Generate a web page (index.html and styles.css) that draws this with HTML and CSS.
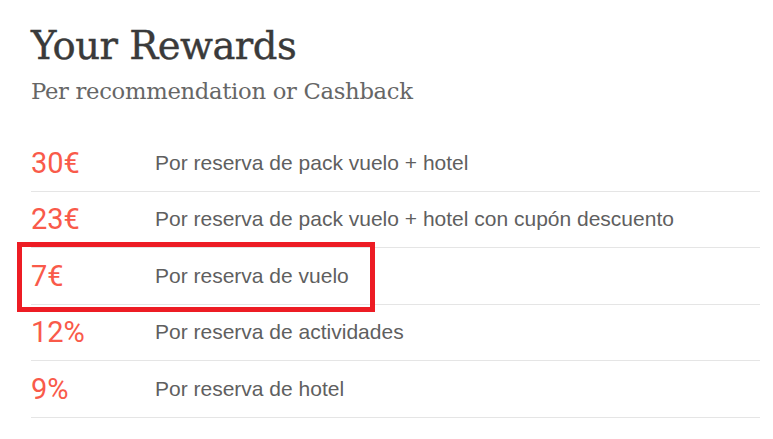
FILE: index.html
```html
<!DOCTYPE html>
<html lang="es">
<head>
    <meta charset="UTF-8">
    <meta name="viewport" content="width=device-width, initial-scale=1.0">
    <title>Your Rewards</title>
    <link rel="stylesheet" href="styles.css">
</head>
<body>
    <div class="rewards">
        <h1>Your Rewards</h1>
        <p class="subtitle">Per recommendation or Cashback</p>

        <!-- Lista de recompensas -->
        <ul class="reward-list">
            <li class="reward">
                <span class="amount">30€</span>
                <span class="desc">Por reserva de pack vuelo + hotel</span>
            </li>
            <li class="reward">
                <span class="amount">23€</span>
                <span class="desc">Por reserva de pack vuelo + hotel con cupón descuento</span>
            </li>
            <li class="reward">
                <span class="amount">7€</span>
                <span class="desc">Por reserva de vuelo</span>
                <span class="highlight"></span>
            </li>
            <li class="reward">
                <span class="amount">12%</span>
                <span class="desc">Por reserva de actividades</span>
            </li>
            <li class="reward">
                <span class="amount">9%</span>
                <span class="desc">Por reserva de hotel</span>
            </li>
        </ul>
    </div>
</body>
</html>
```

FILE: styles.css
```css
body {
    margin: 0;
    background-color: #ffffff;
    font-family: "Liberation Sans", Arial, sans-serif;
}

.rewards {
    padding: 0 13px 0 31px;
}

h1 {
    margin: 21px 0 0;
    font-family: "DejaVu Serif", serif;
    font-size: 38.5px;
    font-weight: normal;
    line-height: 50px;
    letter-spacing: -0.5px;
    color: #3a3a3a;
    -webkit-text-stroke: 0.4px #3a3a3a;
}

.subtitle {
    margin: 6px 0 0;
    font-family: "DejaVu Serif", serif;
    font-size: 22.7px;
    line-height: 28px;
    letter-spacing: -0.3px;
    color: #666666;
}

.reward-list {
    list-style: none;
    margin: 30px 0 0;
    padding: 0;
}

.reward {
    position: relative;
    display: flex;
    align-items: center;
    height: 55.5px;
    border-bottom: 1px solid #e5e5e5;
}

.amount {
    width: 124px;
    flex-shrink: 0;
    font-family: Roboto, sans-serif;
    font-size: 29px;
    color: #f95a4a;
}

.desc {
    font-size: 21px;
    color: #5f5f5f;
}

/* recuadro rojo de la captura */
.highlight {
    position: absolute;
    left: -14px;
    top: -6px;
    width: 348px;
    height: 60px;
    border: 5px solid #ed1c24;
}
```
